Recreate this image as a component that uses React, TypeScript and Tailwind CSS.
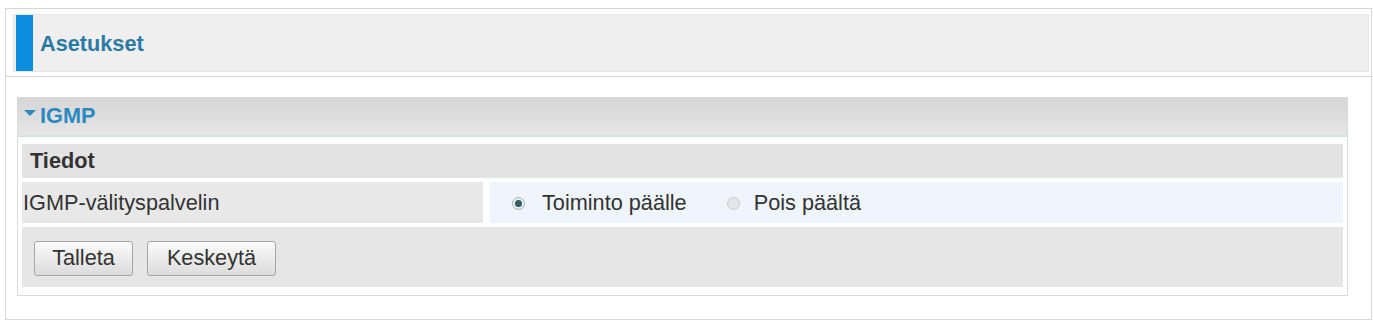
import React, { useState } from 'react';

const App: React.FC = () => {
  const [proxy, setProxy] = useState<'on' | 'off'>('on');

  return (
    <div className="w-[1373px] h-[326px] bg-white pt-2 pl-[5px] font-['Liberation_Sans',Arial,sans-serif] text-[21.7px] text-[#333]">
      <div className="w-[1367px] h-[312px] border border-[#d6d6d6] bg-white">
        {/* page header */}
        <div className="mt-[5px] ml-[7px] mr-[2px] h-[58px] bg-[#efefef] border border-[#e6e6e6] flex items-stretch">
          <div className="ml-[2px] w-[17px] bg-[#0b8de0]" />
          <h1 className="ml-[7px] pt-[2px] flex items-center font-bold text-[21.7px] text-[#2a7aa6]">Asetukset</h1>
        </div>
        <div className="mt-[4px] h-px bg-[#d2d2d2]" />

        {/* IGMP section */}
        <div className="mt-[20px] ml-[11px] w-[1331px] border border-[#d9d9d9] bg-white">
          <div className="h-[39px] flex items-center bg-gradient-to-b from-[#d6d6d6] to-[#e6e6e6] border-b-2 border-[#cfe3e8]">
            <svg width="12" height="7" viewBox="0 0 12 7" className="ml-[6px] mb-[7px]">
              <polygon points="0,0 12,0 6,6" fill="#2a8ac0" />
            </svg>
            <span className="ml-[4px] font-bold text-[#2a8ac0]">IGMP</span>
          </div>

          <div className="px-[4px] pt-[7px] pb-[8px] flex flex-col gap-[4px]">
            <div className="h-[34px] bg-[#e3e3e3] flex items-center pl-[8px] pt-[1px] font-bold text-[#333]">Tiedot</div>

            <div className="h-[41px] flex gap-[7px]">
              <div className="w-[461px] bg-[#e8e8e8] flex items-center pl-[1px] pt-[2px]">IGMP-välityspalvelin</div>
              <div className="flex-1 bg-[#eef5fc] flex items-center pl-[22px] pt-[2px]">
                <label className="flex items-center cursor-pointer" onClick={() => setProxy('on')}>
                  <span className="w-[13px] h-[13px] rounded-full border border-[#a9b4ba] bg-[#e8eced] flex items-center justify-center">
                    {proxy === 'on' && <span className="w-[7px] h-[7px] rounded-full bg-[#2f5f66]" />}
                  </span>
                  <span className="ml-[17px]">Toiminto päälle</span>
                </label>
                <label className="ml-[40px] flex items-center cursor-pointer" onClick={() => setProxy('off')}>
                  <span className="w-[13px] h-[13px] rounded-full border border-[#c6c9cb] bg-[#e4e6e7] flex items-center justify-center">
                    {proxy === 'off' && <span className="w-[7px] h-[7px] rounded-full bg-[#2f5f66]" />}
                  </span>
                  <span className="ml-[14px]">Pois päältä</span>
                </label>
              </div>
            </div>

            <div className="h-[60px] bg-[#e6e6e6] flex items-center pl-[12px] pt-[2px] gap-[14px]">
              <button className="w-[99px] h-[35px] rounded-[3px] border border-[#a6a6a6] bg-gradient-to-b from-[#fbfbfb] to-[#dcdcdc] text-[#333]">Talleta</button>
              <button className="w-[129px] h-[35px] rounded-[3px] border border-[#a6a6a6] bg-gradient-to-b from-[#fbfbfb] to-[#dcdcdc] text-[#333]">Keskeytä</button>
            </div>
          </div>
        </div>
      </div>
    </div>
  );
};

export default App;
